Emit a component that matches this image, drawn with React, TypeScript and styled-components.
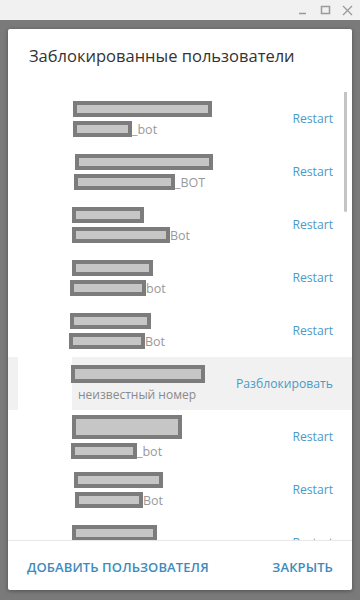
import React from "react";
import styled, { createGlobalStyle } from "styled-components";

const GlobalStyle = createGlobalStyle`
  html, body {
    margin: 0;
    padding: 0;
    background: #7a7a7a;
    font-family: "Open Sans", "Liberation Sans", sans-serif;
  }
`;

interface BlockedUser {
  nameWidth: number;
  nameShift: number;
  nameHeight?: number;
  userWidth?: number;
  userShift?: number;
  suffix?: string;
  note?: string;
  action: string;
  hover?: boolean;
}

const users: BlockedUser[] = [
  { nameWidth: 139, nameShift: 1, userWidth: 59, userShift: 1, suffix: "_bot", action: "Restart" },
  { nameWidth: 138, nameShift: 3, userWidth: 101, userShift: 2, suffix: "_BOT", action: "Restart" },
  { nameWidth: 72, nameShift: 0, userWidth: 98, userShift: 0, suffix: "Bot", action: "Restart" },
  { nameWidth: 81, nameShift: 0, userWidth: 76, userShift: -2, suffix: "bot", action: "Restart" },
  { nameWidth: 81, nameShift: -2, userWidth: 76, userShift: -3, suffix: "Bot", action: "Restart" },
  { nameWidth: 134, nameShift: -1, nameHeight: 18, note: "неизвестный номер", action: "Разблокировать", hover: true },
  { nameWidth: 110, nameShift: 0, nameHeight: 24, userWidth: 66, userShift: -1, suffix: "_bot", action: "Restart" },
  { nameWidth: 89, nameShift: 2, userWidth: 68, userShift: 3, suffix: "Bot", action: "Restart" },
  { nameWidth: 85, nameShift: 0, userWidth: 70, userShift: 0, suffix: "bot", action: "Restart" },
];

const Page = styled.div`
  width: 360px;
  height: 600px;
  display: flex;
  flex-direction: column;
  overflow: hidden;
`;

const TitleBar = styled.div`
  height: 20px;
  background: #f1f1f1;
  display: flex;
  justify-content: flex-end;
  align-items: center;
  gap: 11px;
  padding-right: 7px;
`;

const WinButton = styled.svg`
  width: 11px;
  height: 11px;
  display: block;
`;

const Backdrop = styled.div`
  flex: 1;
  background: #7a7a7a;
  padding: 9px 8px 10px 8px;
  display: flex;
  min-height: 0;
`;

const Dialog = styled.div`
  flex: 1;
  background: #fff;
  border-radius: 2px;
  box-shadow: 0 1px 4px rgba(0, 0, 0, 0.35);
  display: flex;
  flex-direction: column;
  overflow: hidden;
`;

const Title = styled.h1`
  margin: 0;
  height: 63px;
  box-sizing: border-box;
  padding: 15px 0 0 21px;
  font-size: 16.5px;
  font-weight: 400;
  color: #333;
`;

const ListWrap = styled.div`
  position: relative;
  flex: 1;
  min-height: 0;
  overflow: hidden;
`;

const List = styled.div`
  display: flex;
  flex-direction: column;
`;

const ScrollThumb = styled.div`
  position: absolute;
  right: 5px;
  top: -4px;
  width: 3px;
  height: 124px;
  border-radius: 2px;
  background: #c4c4c4;
`;

const Row = styled.div<{ $hover?: boolean }>`
  height: 53px;
  flex-shrink: 0;
  display: flex;
  align-items: center;
  background: ${(p) => (p.$hover ? "#f1f1f1" : "#fff")};
  padding-right: 19px;
`;

const AvatarSlot = styled.div`
  align-self: stretch;
  width: 54px;
  margin-left: 10px;
  background: #fff;
`;

const Info = styled.div`
  flex: 1;
  display: flex;
  flex-direction: column;
  gap: 4px;
  padding-top: 1px;
`;

const Redacted = styled.div<{ $w: number; $h?: number; $shift: number }>`
  width: ${(p) => p.$w}px;
  height: ${(p) => p.$h ?? 16}px;
  margin-left: ${(p) => p.$shift}px;
  box-sizing: border-box;
  border: 4px solid #7c7c7c;
  background: #c6c6c6;
  flex-shrink: 0;
`;

const UserLine = styled.div`
  display: flex;
  align-items: center;
  height: 16px;
`;

const Suffix = styled.span`
  font-size: 12.5px;
  color: #999;
  line-height: 16px;
  padding-top: 1px;
`;

const Note = styled.span`
  font-size: 12px;
  color: #8a8a8a;
  line-height: 16px;
  margin-left: 6px;
`;

const Action = styled.span`
  font-size: 12.2px;
  color: #4b9ac8;
  white-space: nowrap;
`;

const Footer = styled.div`
  height: 49px;
  border-top: 1px solid #e8e8e8;
  display: flex;
  align-items: center;
  justify-content: space-between;
  padding: 0 19px;
  flex-shrink: 0;
`;

const FooterButton = styled.span`
  font-size: 13px;
  font-weight: 600;
  color: #3e8bba;
  letter-spacing: 0.1px;
  padding-top: 2px;
`;

const App: React.FC = () => {
  return (
    <>
      <GlobalStyle />
      <Page>
        <TitleBar>
          <WinButton viewBox="0 0 11 11">
            <line x1="1" y1="8.5" x2="8" y2="8.5" stroke="#9a9a9a" strokeWidth="1.5" />
          </WinButton>
          <WinButton viewBox="0 0 11 11">
            <rect x="1.5" y="1.5" width="8" height="7" fill="none" stroke="#9a9a9a" strokeWidth="1.5" />
          </WinButton>
          <WinButton viewBox="0 0 11 11">
            <path d="M1 1 L10 10 M10 1 L1 10" stroke="#9a9a9a" strokeWidth="1.3" />
          </WinButton>
        </TitleBar>
        <Backdrop>
          <Dialog>
            <Title>Заблокированные пользователи</Title>
            <ListWrap>
              <List>
                {users.map((u, i) => (
                  <Row key={i} $hover={u.hover}>
                    <AvatarSlot />
                    <Info>
                      <Redacted $w={u.nameWidth} $h={u.nameHeight} $shift={u.nameShift} />
                      {u.note ? (
                        <Note>{u.note}</Note>
                      ) : (
                        <UserLine>
                          <Redacted $w={u.userWidth ?? 60} $shift={u.userShift ?? 0} />
                          <Suffix>{u.suffix}</Suffix>
                        </UserLine>
                      )}
                    </Info>
                    <Action>{u.action}</Action>
                  </Row>
                ))}
              </List>
              <ScrollThumb />
            </ListWrap>
            <Footer>
              <FooterButton>ДОБАВИТЬ ПОЛЬЗОВАТЕЛЯ</FooterButton>
              <FooterButton>ЗАКРЫТЬ</FooterButton>
            </Footer>
          </Dialog>
        </Backdrop>
      </Page>
    </>
  );
};

export default App;
